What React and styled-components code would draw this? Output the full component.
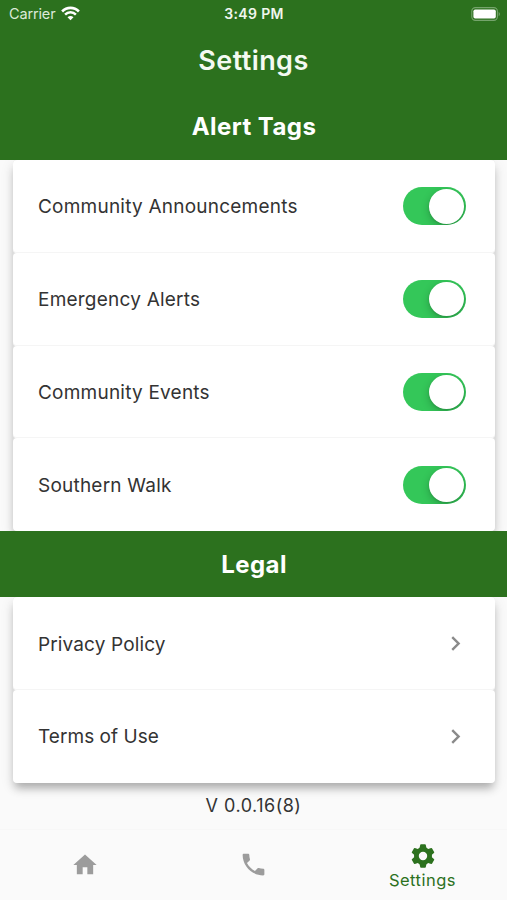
import React from "react";
import styled, { createGlobalStyle } from "styled-components";
import { MdHome, MdPhone, MdChevronRight } from "react-icons/md";

const GREEN = "#2c711e";

const GlobalStyle = createGlobalStyle`
  * { box-sizing: border-box; }
  body { margin: 0; background: #fafafa; }
`;

const Screen = styled.div`
  width: 507px;
  height: 900px;
  display: flex;
  flex-direction: column;
  overflow: hidden;
  background: #fafafa;
  color: #333;
  font-family: Inter, "Liberation Sans", sans-serif;
`;

const StatusBar = styled.div`
  height: 27px;
  flex: none;
  display: grid;
  grid-template-columns: 1fr auto 1fr;
  align-items: center;
  padding: 0 6px 0 9px;
  background: ${GREEN};
  color: #fff;
`;

const Carrier = styled.div`
  display: flex;
  align-items: center;
  gap: 6px;
  font-size: 14.5px;
  letter-spacing: -0.15px;
  color: #dcead8;
`;

const Clock = styled.div`
  padding-right: 2px;
  font-size: 14px;
  font-weight: 600;
  letter-spacing: 0.35px;
  color: #f0f6ee;
`;

const BatterySlot = styled.div`
  display: flex;
  justify-content: flex-end;
`;

const AppBar = styled.header`
  height: 66px;
  flex: none;
  display: flex;
  align-items: center;
  justify-content: center;
  padding-top: 1px;
  background: ${GREEN};
  color: #f4faf2;
  font-size: 27px;
  font-weight: 600;
  letter-spacing: 0.4px;
`;

const SectionHeader = styled.h2`
  position: relative;
  z-index: 1;
  height: ${(p) => p.$height};
  flex: none;
  margin: 0;
  display: flex;
  align-items: center;
  justify-content: center;
  background: ${GREEN};
  color: #fff;
  font-size: 24px;
  font-weight: 700;
  letter-spacing: 0.45px;
  padding-left: 1px;
`;

const CardList = styled.div`
  flex: none;
  margin: 0 12.5px 0 13px;
  display: flex;
  flex-direction: column;
  border-radius: 4px;
  background: #dedede;
  box-shadow: 0 7px 8px -2px rgba(0, 0, 0, 0.25), 0 4px 14px rgba(0, 0, 0, 0.11);
`;

const Row = styled.div`
  height: 92.8px;
  display: flex;
  align-items: center;
  justify-content: space-between;
  padding: 0 ${(p) => (p.$link ? "25px" : "29px")} 0 25px;
  border-radius: 4px;
  background: #fff;
  box-shadow: inset 0 -1px 0 ${(p) => (p.$last ? "transparent" : "#f5f5f5")};
`;

const RowLabel = styled.span`
  font-size: 19px;
  letter-spacing: ${(p) => p.$tracking || "0.22px"};
  padding-top: 1px;
`;

const Toggle = styled.div`
  width: 63px;
  height: 38px;
  display: flex;
  align-items: center;
  justify-content: flex-end;
  padding: 2px;
  border-radius: 19px;
  overflow: hidden;
  background: #34c759;
`;

const Knob = styled.div`
  width: 35px;
  height: 34.5px;
  border-radius: 50%;
  background: #fff;
  box-shadow: 0 3px 8px rgba(0, 0, 0, 0.22), 0 1px 2px rgba(0, 0, 0, 0.12);
`;

const Version = styled.div`
  flex: 1;
  display: flex;
  align-items: center;
  justify-content: center;
  font-size: 18px;
  letter-spacing: 0.5px;
`;

const TabBar = styled.nav`
  height: 71px;
  flex: none;
  display: grid;
  grid-template-columns: repeat(3, 1fr);
  border-top: 1px solid #f7f7f7;
  background: #fafafa;
`;

const Tab = styled.div`
  display: flex;
  flex-direction: column;
  align-items: center;
  justify-content: center;
  color: ${(p) => (p.$active ? GREEN : "#9c9c9c")};
  font-size: 16.5px;
  line-height: 21px;
  letter-spacing: 0.5px;
  padding-top: ${(p) => (p.$active ? "2px" : "0")};
  padding-bottom: ${(p) => (p.$active ? "0" : "1px")};
`;

const WifiIcon = () => (
  <svg width="19" height="15" viewBox="0 0 19 15" fill="none" stroke="#fff">
    <path d="M1.1 5.5C5.8.6 13.2.6 17.9 5.5" strokeWidth="2.6" />
    <path d="M4.1 8.6C7.1 5.5 11.9 5.5 14.9 8.6" strokeWidth="2.5" />
    <path d="M6.5 11.2Q9.5 8.8 12.5 11.2L9.5 14.2Z" fill="#fff" stroke="none" />
  </svg>
);

const BatteryIcon = () => (
  <svg width="30" height="14" viewBox="0 0 30 14">
    <rect x="0.8" y="0.6" width="25.6" height="12.8" rx="3.6" fill="none" stroke="#75a46c" strokeWidth="1.1" />
    <rect x="2.4" y="2.4" width="22.4" height="9.2" rx="1.8" fill="#fff" />
    <path d="M27.7 4.7Q30.1 7 27.7 9.3Z" fill="#75a46c" />
  </svg>
);

const GearIcon = () => (
  <svg width="28" height="28" viewBox="-14 -14 28 28" fill="currentColor">
    <circle r="6.6" fill="none" stroke="currentColor" strokeWidth="4.8" />
    {[0, 60, 120, 180, 240, 300].map((angle) => (
      <path
        key={angle}
        transform={`rotate(${angle})`}
        d="M-3.6-7.2L-2.8-11Q-2.7-11.7-2-11.7H2Q2.7-11.7 2.8-11L3.6-7.2Z"
      />
    ))}
  </svg>
);

const alertTags = [
  "Community Announcements",
  "Emergency Alerts",
  "Community Events",
  "Southern Walk",
];

const legalLinks = [
  { label: "Privacy Policy", tracking: "0.13px" },
  { label: "Terms of Use", tracking: "0.05px" },
];

export default function App() {
  return (
    <Screen>
      <GlobalStyle />
      <StatusBar>
        <Carrier>
          Carrier
          <WifiIcon />
        </Carrier>
        <Clock>3:49 PM</Clock>
        <BatterySlot>
          <BatteryIcon />
        </BatterySlot>
      </StatusBar>
      <AppBar>Settings</AppBar>
      <SectionHeader $height="67px">Alert Tags</SectionHeader>
      <CardList>
        {alertTags.map((label, i) => (
          <Row key={label} $last={i === alertTags.length - 1}>
            <RowLabel>{label}</RowLabel>
            <Toggle role="switch" aria-checked="true" aria-label={label}>
              <Knob />
            </Toggle>
          </Row>
        ))}
      </CardList>
      <SectionHeader $height="66px">Legal</SectionHeader>
      <CardList>
        {legalLinks.map(({ label, tracking }, i) => (
          <Row key={label} $link $last={i === legalLinks.length - 1}>
            <RowLabel $tracking={tracking}>{label}</RowLabel>
            <MdChevronRight size={29} color="#8a8a8a" />
          </Row>
        ))}
      </CardList>
      <Version>V 0.0.16(8)</Version>
      <TabBar>
        <Tab>
          <MdHome size={28} />
        </Tab>
        <Tab>
          <MdPhone size={29} />
        </Tab>
        <Tab $active>
          <GearIcon />
          Settings
        </Tab>
      </TabBar>
    </Screen>
  );
}
